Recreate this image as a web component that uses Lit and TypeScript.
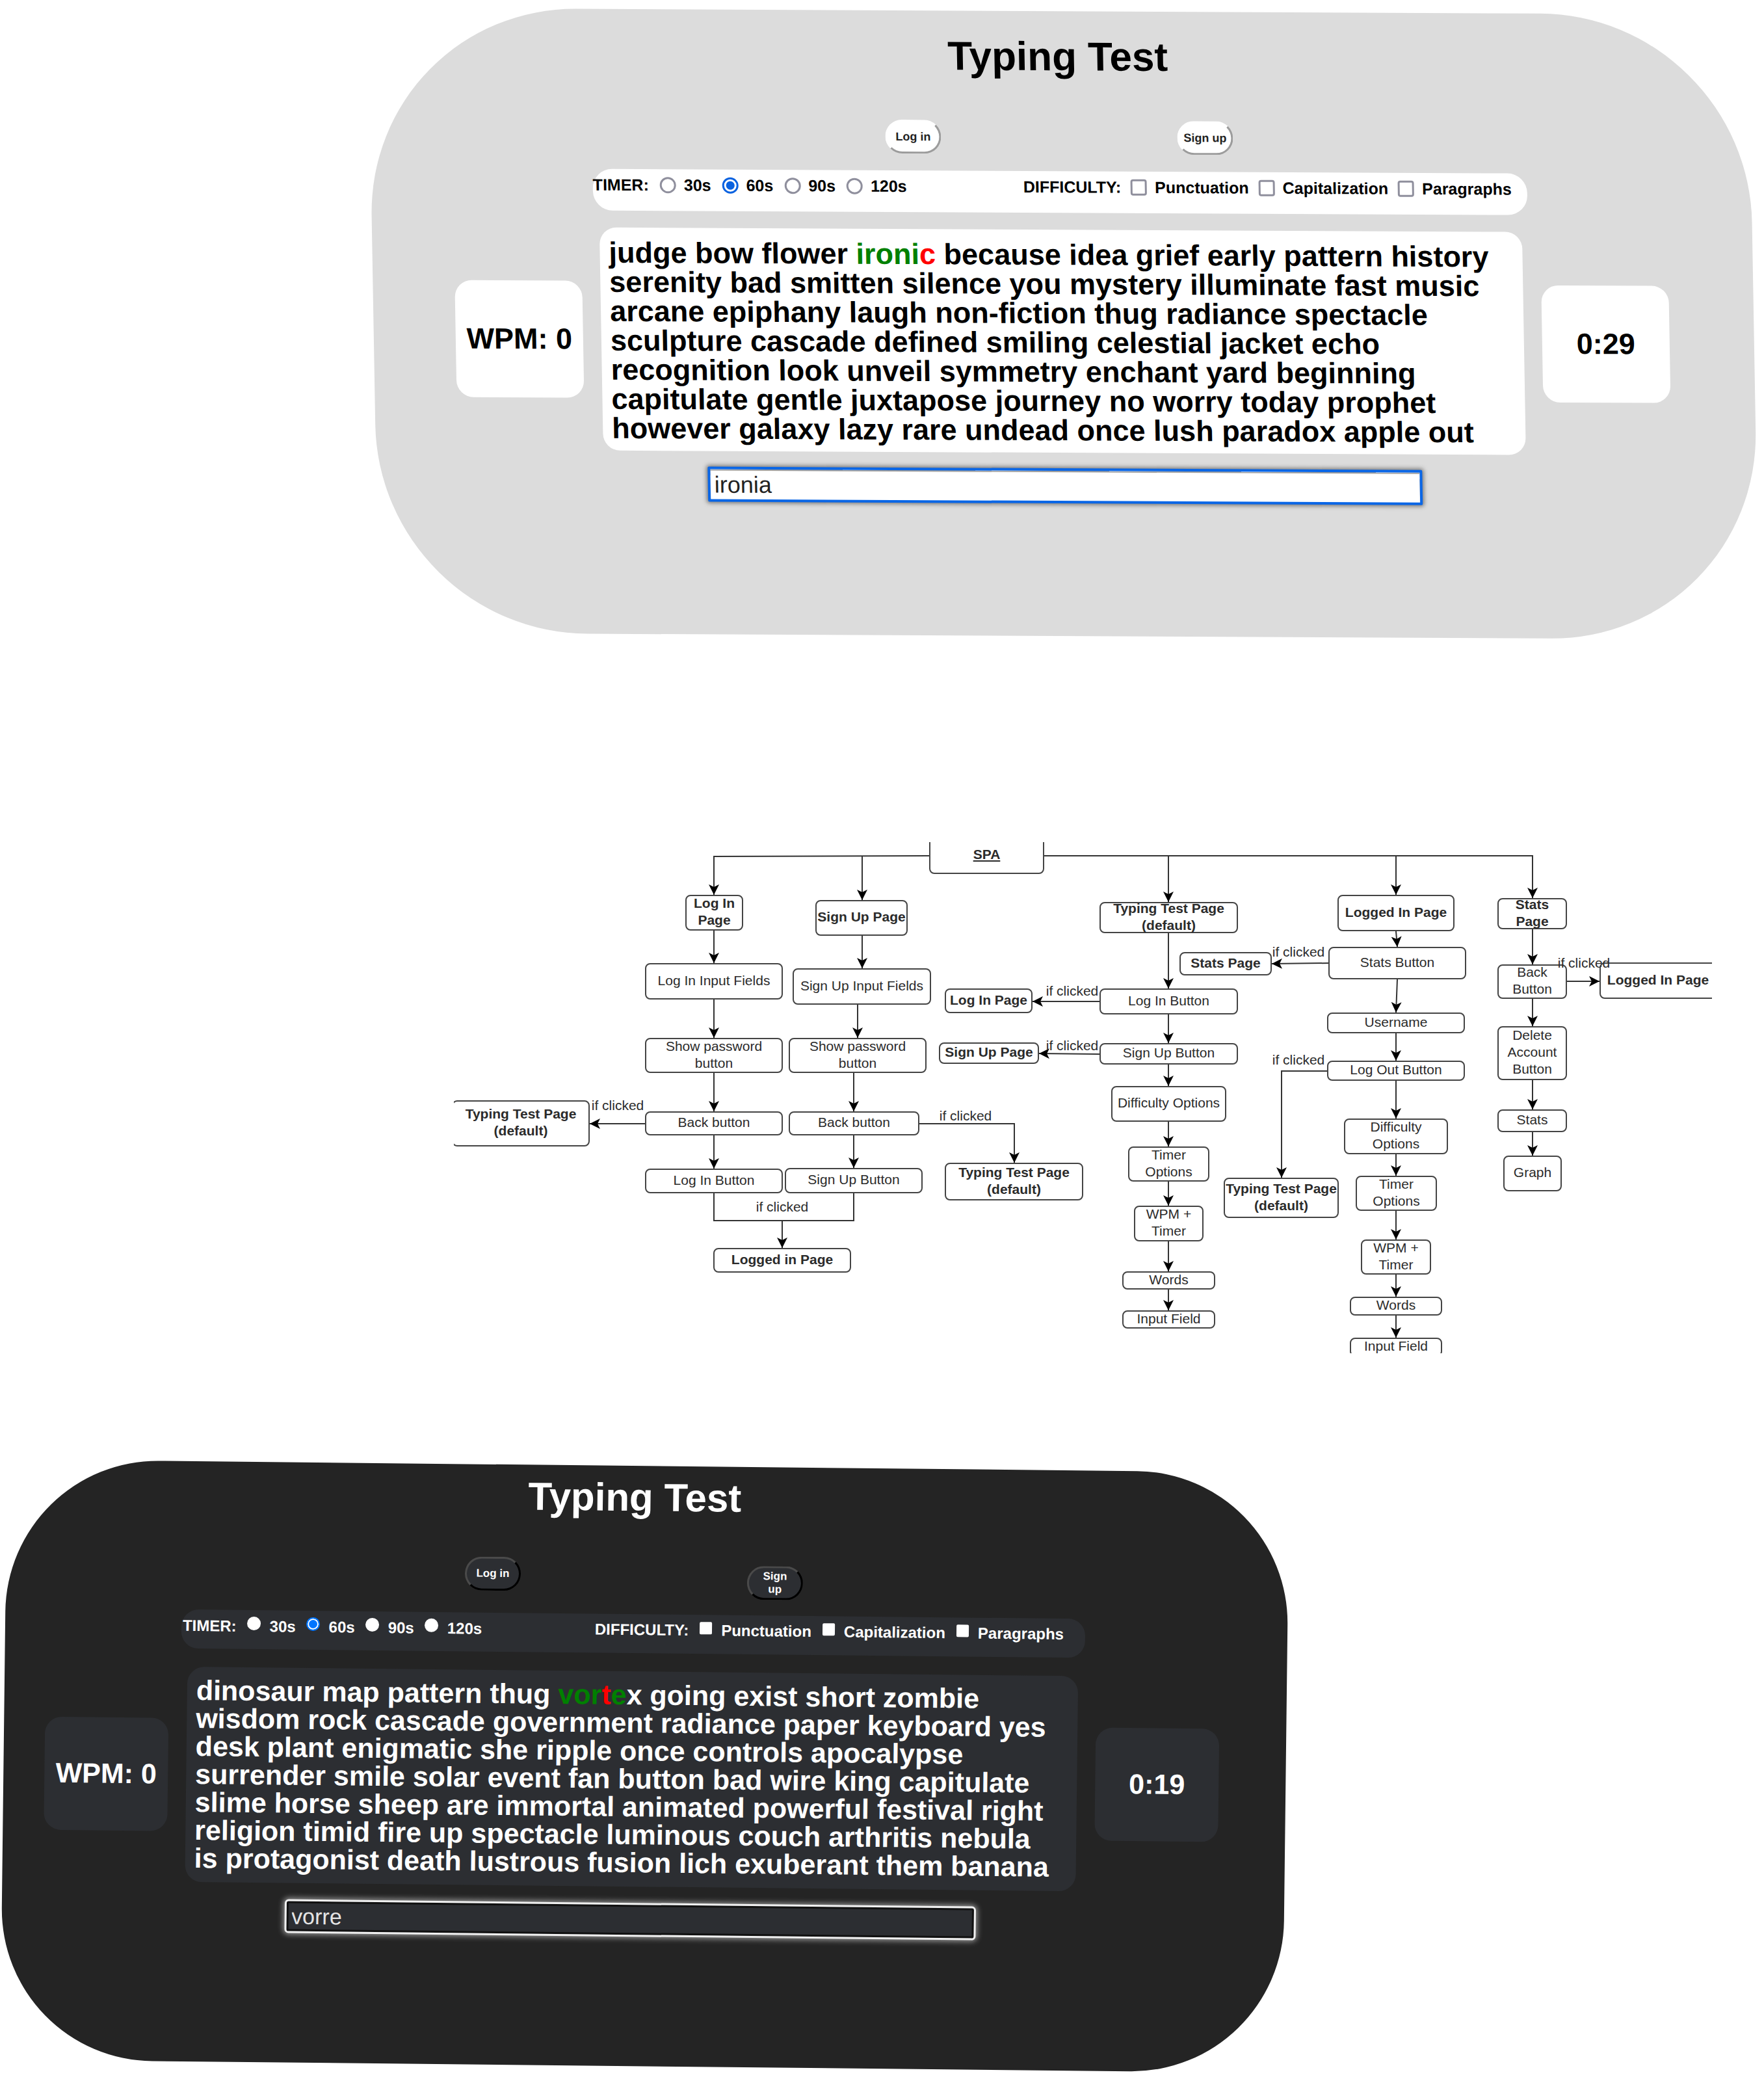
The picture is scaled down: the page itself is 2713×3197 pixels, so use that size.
import { LitElement, html, css, svg } from "lit";
import { customElement, property } from "lit/decorators.js";
import { classMap } from "lit/directives/class-map.js";

type Mark = "" | "good" | "bad";
interface Run { text: string; mark: Mark; }

@customElement("typing-panel")
class TypingPanel extends LitElement {
  @property() theme: "light" | "dark" = "light";
  @property({ attribute: false }) runs: Run[] = [];
  @property() clock = "";
  @property() typed = "";

  static styles = css`
    :host { display: block; font-family: "Liberation Sans", Arial, sans-serif; font-weight: 700; }
    .panel { box-sizing: border-box; display: flex; flex-direction: column; transform-origin: 0 0; }
    .title { margin: 0; text-align: center; }
    .auth { display: flex; justify-content: center; align-items: baseline; }
    .auth button {
      box-sizing: border-box; width: 86px; height: 52px; padding: 0 12px; border-radius: 26px;
      font-family: inherit; font-weight: 700; line-height: 20px;
    }
    .options { display: flex; justify-content: space-between; align-items: flex-start; box-sizing: border-box; }
    .group { display: flex; align-items: center; margin: 0; }
    .legend { font-size: 24px; line-height: 28px; }
    .choice { display: flex; align-items: center; line-height: 28px; white-space: nowrap; }
    input { margin: 0; }
    .choice input { appearance: none; box-sizing: border-box; flex: none; }
    .choice input[type="radio"] { border-radius: 50%; }
    .row { display: flex; align-items: center; gap: 28px; }
    .stat { flex: none; display: flex; align-items: center; justify-content: center; border-radius: 26px; white-space: nowrap; }
    .words { flex: 1; margin: 0; box-sizing: border-box; border-radius: 26px; }
    .good { color: #008000; }
    .bad { color: #ff0000; }
    .entry { align-self: center; box-sizing: border-box; font-family: inherit; outline: none; border-radius: 2px; }

    .light { height: 961px; border-radius: 320px; background: #dcdcdc; color: #000; padding: 34px 130px 0 126px; transform: skew(1deg, 0.28deg); }
    .light .title { font-size: 62px; line-height: 72px; margin-bottom: 62px; }
    .light .auth { gap: 363px; margin-bottom: 26px; }
    .light .auth button { font-size: 18px; background: #fff; color: #222; border: 3px solid #fff; border-right-color: #9c9c9c; border-bottom-color: #9c9c9c; padding: 0; }
    .light .options { height: 64px; margin: 0 215px 26px; padding: 10px 24px 0 0; background: #fff; border-radius: 30px; }
    .light .legend { font-size: 25px; }
    .light .group { gap: 17px; }
    .light .checks { gap: 15px; }
    .light .choice { gap: 12px; font-size: 25px; }
    .light .choice input { width: 25px; height: 25px; border: 3px solid #8f8f9d; background: #fff; }
    .light .choice input[type="checkbox"] { border-radius: 4px; }
    .light .choice input[type="radio"]:checked { border-color: #0a62e0; background: radial-gradient(circle, #0a62e0 6px, #fff 7px); }
    .light .stat { width: 196px; height: 180px; background: #fff; font-size: 45px; }
    .light .words { background: #fff; font-size: 45px; line-height: 45px; padding: 16px 30px 12px 14px; }
    .light .entry { width: 1099px; height: 54px; margin-top: 24px; padding: 2px 6px 0; font-size: 36px; color: #222; background: #fff; border: 4px solid #0a66e6; box-shadow: 0 0 6px 2px #777, inset 0 2px 1px #999; }

    .dark { height: 923px; border-radius: 234px; background: #242424; color: #fff; padding: 14px 103px 0 63px; transform: skew(-0.68deg, 0.6deg); }
    .dark .title { font-size: 60px; line-height: 70px; margin-bottom: 58px; }
    .dark .auth { gap: 348px; margin-bottom: 24px; }
    .dark .auth button { font-size: 17px; background: #2c2e32; color: #fff; border: 3px solid #4a4a4a; border-right-color: #000; border-bottom-color: #000; }
    .dark .options { height: 60px; margin: 0 208px 28px; padding: 10px 33px 0 2px; background: #2c2e32; border-radius: 26px; }
    .dark .group { gap: 16px; }
    .dark .checks { gap: 17px; }
    .dark .choice { gap: 14px; font-size: 24px; }
    .dark .choice input { background: #fff; margin-bottom: 8px; }
    .dark .choice input[type="radio"] { width: 21px; height: 21px; border: 0; }
    .dark .choice input[type="checkbox"] { width: 19px; height: 19px; border: 0; border-radius: 2px; }
    .dark .choice input[type="radio"]:checked { border: 2px solid #0075ff; box-shadow: inset 0 0 0 2px #fff; background: #0075ff; }
    .dark .stat { width: 190px; height: 174px; background: #2c2e32; font-size: 43px; }
    .dark .words { background: #2c2e32; font-size: 43px; line-height: 43px; padding: 15px 30px 15px 14px; }
    .dark .entry { width: 1063px; height: 52px; margin-top: 25px; padding: 0 8px; font-size: 34px; color: #e4e4e4; background: #2c2e32; border: 3px solid #f0f0f0; border-radius: 6px; box-shadow: 0 0 8px 2px #999, inset 0 0 0 3px #111; }
  `;

  private timer(seconds: string) {
    return html`<label class="choice"><input type="radio" name="timer" .checked=${seconds === "60s"} />${seconds}</label>`;
  }

  private difficulty(name: string) {
    return html`<label class="choice"><input type="checkbox" />${name}</label>`;
  }

  render() {
    return html`
      <section class="panel ${this.theme}">
        <h1 class="title">Typing Test</h1>
        <div class="auth"><button type="button">Log in</button><button type="button">Sign up</button></div>
        <div class="options">
          <div class="group" role="radiogroup" aria-labelledby="timer-name">
            <span class="legend" id="timer-name">TIMER:</span>
            ${["30s", "60s", "90s", "120s"].map((s) => this.timer(s))}
          </div>
          <div class="group checks" role="group" aria-labelledby="difficulty-name">
            <span class="legend" id="difficulty-name">DIFFICULTY:</span>
            ${["Punctuation", "Capitalization", "Paragraphs"].map((d) => this.difficulty(d))}
          </div>
        </div>
        <div class="row">
          <div class="stat">WPM: 0</div>
          <p class="words">${this.runs.map((r) => (r.mark ? html`<span class=${r.mark}>${r.text}</span>` : r.text))}</p>
          <div class="stat">${this.clock}</div>
        </div>
        <input class="entry" type="text" aria-label="Type the words" .value=${this.typed} />
      </section>
    `;
  }
}

interface FlowNode { text: string; x: number; y: number; w: number; h: number; bold?: boolean; underline?: boolean; }

const n = (text: string, x: number, y: number, w: number, h: number, bold = false): FlowNode => ({ text, x, y, w, h, bold });

const NODES: FlowNode[] = [
  { text: "SPA", x: 731, y: -8, w: 177, h: 57, bold: true, underline: true },
  n("Log In\nPage", 356, 81, 89, 55, true),
  n("Log In Input Fields", 294, 186, 212, 56),
  n("Show password\nbutton", 294, 301, 212, 54),
  n("Back button", 294, 414, 212, 37),
  n("Log In Button", 294, 502, 212, 38),
  n("Logged in Page", 399, 624, 212, 38, true),
  n("Typing Test Page\n(default)", -3, 397, 212, 71, true),
  n("Sign Up Page", 556, 89, 142, 55, true),
  n("Sign Up Input Fields", 521, 194, 213, 56),
  n("Show password\nbutton", 515, 301, 212, 54),
  n("Back button", 515, 414, 201, 37),
  n("Sign Up Button", 509, 501, 212, 39),
  n("Typing Test Page\n(default)", 755, 493, 213, 58, true),
  n("Typing Test Page\n(default)", 993, 92, 213, 48, true),
  n("Stats Page", 1116, 169, 142, 36, true),
  n("Log In Page", 755, 225, 135, 38, true),
  n("Log In Button", 993, 225, 213, 40),
  n("Sign Up Page", 746, 308, 154, 33, true),
  n("Sign Up Button", 993, 309, 213, 33),
  n("Difficulty Options", 1011, 375, 177, 55),
  n("Timer\nOptions", 1037, 468, 125, 54),
  n("WPM +\nTimer", 1046, 559, 107, 55),
  n("Words", 1028, 660, 143, 28),
  n("Input Field", 1028, 720, 143, 28),
  n("Logged In Page", 1359, 81, 180, 56, true),
  n("Stats Button", 1345, 161, 212, 50),
  n("Username", 1343, 262, 212, 32),
  n("Log Out Button", 1343, 336, 212, 31),
  n("Difficulty\nOptions", 1369, 425, 160, 55),
  n("Timer\nOptions", 1387, 513, 125, 54),
  n("WPM +\nTimer", 1395, 611, 108, 54),
  n("Words", 1378, 699, 142, 29),
  n("Input Field", 1378, 762, 142, 29),
  n("Typing Test Page\n(default)", 1184, 516, 177, 62, true),
  n("Stats\nPage", 1605, 86, 107, 48, true),
  n("Back\nButton", 1605, 188, 107, 53),
  n("Delete\nAccount\nButton", 1605, 283, 107, 83),
  n("Stats", 1605, 411, 107, 35),
  n("Graph", 1614, 482, 90, 55),
  n("Logged In Page", 1762, 185, 180, 56, true),
];

const NOTES: [number, number][] = [
  [252, 405], [505, 561], [787, 421], [951, 229], [951, 313], [1299, 169], [1299, 335], [1738, 186],
];

const ARROWS = [
  "M731 21 L400 22 V81", "M628 22 V89", "M908 21 H1659 V86", "M1099 21 V92", "M1449 21 V81",
  "M400 136 V186", "M400 242 V301", "M400 355 V414", "M400 451 V502",
  "M628 144 V194", "M621 250 V301", "M615 355 V414", "M615 451 V501",
  "M294 433 H209", "M505 582 V624", "M716 433 H862 V493",
  "M1099 140 V225", "M1099 265 V309", "M1099 342 V375", "M1099 430 V468", "M1099 522 V559", "M1099 614 V660", "M1099 688 V720",
  "M993 245 H890", "M993 326 L900 325", "M1345 186 L1258 187",
  "M1449 137 L1451 161", "M1451 211 L1449 262", "M1449 294 V336", "M1449 367 V425", "M1449 480 V513", "M1449 567 V611", "M1449 665 V699", "M1449 728 V762",
  "M1343 352 H1273 V516",
  "M1659 134 V188", "M1659 241 V283", "M1659 366 V411", "M1659 446 V482", "M1712 214 H1762",
];

@customElement("flow-chart")
class FlowChart extends LitElement {
  static styles = css`
    :host { display: block; font-family: "Liberation Sans", Helvetica, Arial, sans-serif; font-size: 21px; line-height: 26px; color: #2b2b2b; }
    .canvas { position: relative; height: 786px; overflow: hidden; }
    .lines { position: absolute; inset: 0; width: 100%; height: 100%; }
    .line { fill: none; stroke: #333; stroke-width: 2; }
    .head { fill: #000; }
    .node {
      position: absolute; box-sizing: border-box; display: flex; align-items: center; justify-content: center; padding-bottom: 3px;
      border: 2px solid #444; border-radius: 8px; background: #fff; text-align: center; white-space: pre;
    }
    .bold { font-weight: 700; }
    .underline { text-decoration: underline; }
    .note { position: absolute; transform: translate(-50%, -50%); white-space: nowrap; }
  `;

  render() {
    return html`
      <div class="canvas">
        ${NODES.map((b) => html`<div class=${classMap({ node: true, bold: !!b.bold, underline: !!b.underline })}
          style="left:${b.x}px;top:${b.y}px;width:${b.w}px;height:${b.h}px">${b.text}</div>`)}
        <svg class="lines" aria-hidden="true">
          <defs>
            <marker id="head" markerUnits="userSpaceOnUse" markerWidth="18" markerHeight="16" refX="16" refY="8" orient="auto">
              <path class="head" d="M16 8 L0 0 L4 8 L0 16 Z" />
            </marker>
          </defs>
          ${ARROWS.map((d) => svg`<path class="line" d=${d} marker-end="url(#head)" />`)}
          <path class="line" d="M400 540 V582 H615 V540" />
        </svg>
        ${NOTES.map(([x, y]) => html`<span class="note" style="left:${x}px;top:${y}px">if clicked</span>`)}
      </div>
    `;
  }
}

const LIGHT_RUNS: Run[] = [
  { text: "judge bow flower ", mark: "" },
  { text: "ironi", mark: "good" },
  { text: "c", mark: "bad" },
  { text: " because idea grief early pattern history serenity bad smitten silence you mystery illuminate fast music arcane epiphany laugh non-fiction thug radiance spectacle sculpture cascade defined smiling celestial jacket echo recognition look unveil symmetry enchant yard beginning capitulate gentle juxtapose journey no worry today prophet however galaxy lazy rare undead once lush paradox apple out", mark: "" },
];

const DARK_RUNS: Run[] = [
  { text: "dinosaur map pattern thug ", mark: "" },
  { text: "vor", mark: "good" },
  { text: "t", mark: "bad" },
  { text: "e", mark: "good" },
  { text: "x going exist short zombie wisdom rock cascade government radiance paper keyboard yes desk plant enigmatic she ripple once controls apocalypse surrender smile solar event fan button bad wire king capitulate slime horse sheep are immortal animated powerful festival right religion timid fire up spectacle luminous couch arthritis nebula is protagonist death lustrous fusion lich exuberant them banana", mark: "" },
];

@customElement("app-root")
class AppRoot extends LitElement {
  static styles = css`
    :host { display: block; background: #fff; overflow: hidden; }
    .page { display: flex; flex-direction: column; padding: 12px 0 30px; }
    .first { margin: 0 24px 0 566px; }
    .chart { margin: 322px 80px 163px 698px; }
    .second { margin: 0 730px 0 11px; }
  `;

  render() {
    return html`
      <main class="page">
        <typing-panel class="first" theme="light" clock="0:29" typed="ironia" .runs=${LIGHT_RUNS}></typing-panel>
        <flow-chart class="chart"></flow-chart>
        <typing-panel class="second" theme="dark" clock="0:19" typed="vorre" .runs=${DARK_RUNS}></typing-panel>
      </main>
    `;
  }
}
